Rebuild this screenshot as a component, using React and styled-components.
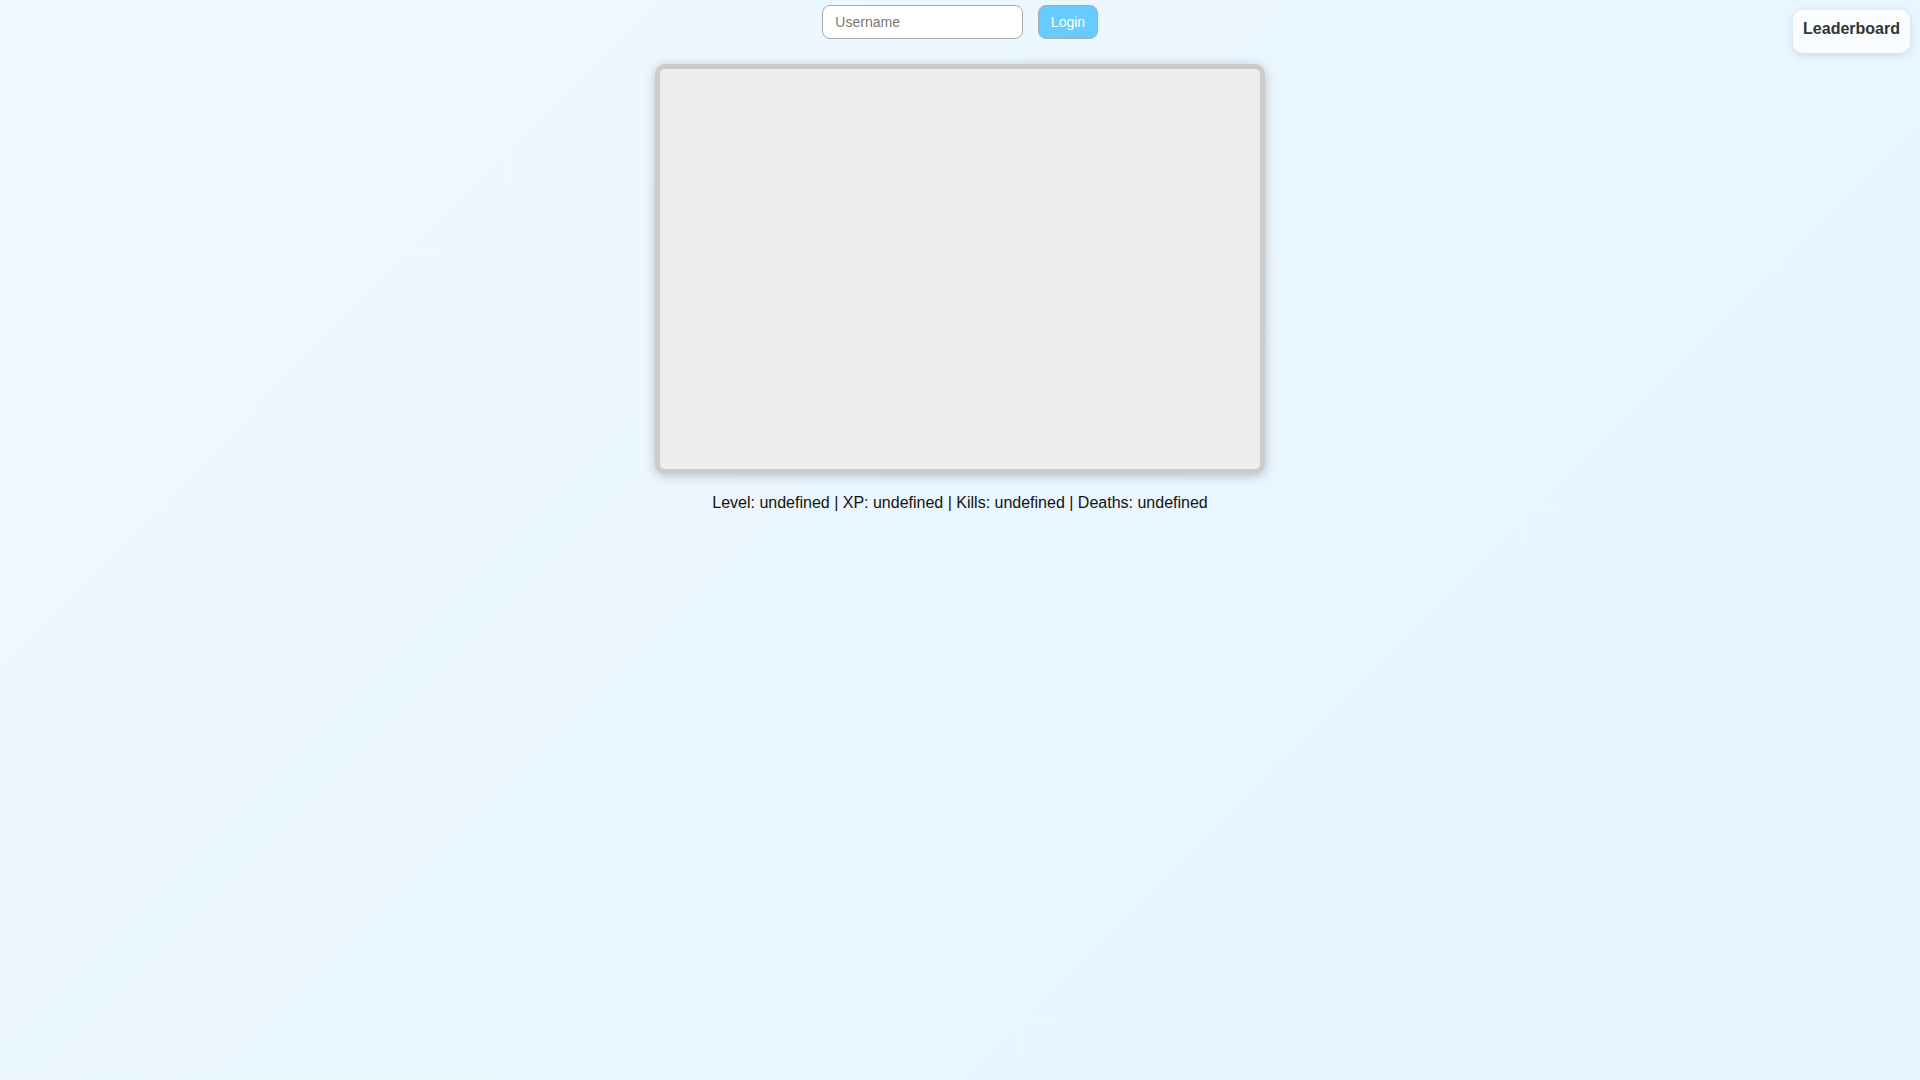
import styled, { createGlobalStyle } from "styled-components";

const GlobalStyle = createGlobalStyle`
    html, body {
        margin: 0;
        padding: 0;
    }
    body {
        min-height: 100vh;
        font-family: "Liberation Sans", Arial, sans-serif;
        background: linear-gradient(135deg, #f0f8ff, #e4f5ff);
    }
`;

const Page = styled.div`
    display: flex;
    flex-direction: column;
    align-items: center;
    min-height: 100vh;
    padding-top: 5px;
    box-sizing: border-box;
`;

const LoginBar = styled.div`
    display: flex;
    align-items: center;
    gap: 15px;
`;

const Input = styled.input`
    width: 201px;
    height: 34px;
    box-sizing: border-box;
    padding: 8px 12px;
    font-family: "Liberation Sans", Arial, sans-serif;
    font-size: 14px;
    border: 1px solid #aaa;
    border-radius: 8px;
    background: #fff;
    outline: none;

    &::placeholder {
        color: #777;
    }
`;

const LoginButton = styled.button`
    height: 34px;
    box-sizing: border-box;
    padding: 8px 11.5px;
    font-family: "Liberation Sans", Arial, sans-serif;
    font-size: 14px;
    color: #fff;
    background: #66ccff;
    border: 1px solid #aaa;
    border-radius: 8px;
    cursor: pointer;
`;

const GameCanvas = styled.div`
    width: 600px;
    height: 400px;
    margin-top: 25px;
    background: #eeeeee;
    border: 5px solid #cccccc;
    border-radius: 10px;
    box-shadow: 0 2px 12px rgba(0, 0, 0, 0.22);
`;

const Stats = styled.div`
    margin-top: 20px;
    font-size: 16px;
    line-height: 18px;
    color: #111;
`;

const Leaderboard = styled.div`
    position: absolute;
    top: 10px;
    right: 10px;
    padding: 10px 10px 15px;
    background: rgba(255, 255, 255, 0.75);
    border-radius: 10px;
    box-shadow: 0 2px 10px rgba(0, 0, 0, 0.12);
    font-size: 16px;
    line-height: 18px;
    font-weight: bold;
    color: #333;
`;

export default function App() {
    return (
        <>
            <GlobalStyle />
            <Page>
                <LoginBar>
                    <Input type="text" placeholder="Username" />
                    <LoginButton>Login</LoginButton>
                </LoginBar>
                <GameCanvas />
                <Stats>
                    Level: undefined | XP: undefined | Kills: undefined | Deaths: undefined
                </Stats>
            </Page>
            <Leaderboard>Leaderboard</Leaderboard>
        </>
    );
}
